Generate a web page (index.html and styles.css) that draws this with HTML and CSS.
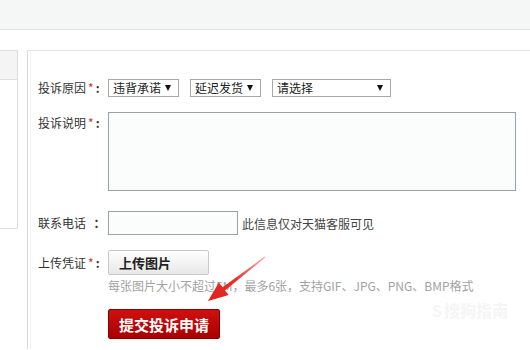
FILE: index.html
```html
<!doctype html>
<html lang="zh-CN">

<head>
  <meta charset="utf-8">
  <meta name="viewport" content="width=device-width, initial-scale=1">
  <title>投诉申请</title>
  <link rel="stylesheet" href="styles.css">
</head>

<body>
  <div class="topbar"></div>

  <div class="page">
    <div class="side">
      <div class="side-head"></div>
    </div>

    <div class="main">
      <div class="row row-reason">
        <span class="label">投诉原因<em>*</em><b>:</b></span>
        <div class="select sel-a"><span>违背承诺</span><i></i></div>
        <div class="select sel-b"><span>延迟发货</span><i></i></div>
        <div class="select sel-c"><span>请选择</span><i></i></div>
      </div>

      <div class="row row-desc">
        <span class="label">投诉说明<em>*</em><b>:</b></span>
        <textarea class="desc"></textarea>
      </div>

      <div class="row row-phone">
        <span class="label">联系电话&nbsp;&nbsp;<b>：</b></span>
        <input class="phone" type="text">
        <span class="note">此信息仅对天猫客服可见</span>
      </div>

      <div class="row row-upload">
        <span class="label">上传凭证<em>*</em><b>:</b></span>
        <button class="btn-upload" type="button">上传图片</button>
      </div>
      <p class="hint">每张图片大小不超过5M，最多6张，支持GIF、JPG、PNG、BMP格式</p>

      <button class="btn-submit" type="button">提交投诉申请</button>
    </div>
  </div>

  <!-- red pointer drawn over the page -->
  <svg class="arrow" width="530" height="350" viewBox="0 0 530 350">
    <defs>
      <linearGradient id="ag" x1="265" y1="257" x2="208" y2="301" gradientUnits="userSpaceOnUse">
        <stop offset="0" stop-color="#f46a66" stop-opacity="0.6"/>
        <stop offset="0.5" stop-color="#e8302c"/>
        <stop offset="1" stop-color="#e0201c"/>
      </linearGradient>
    </defs>
    <polygon fill="url(#ag)" points="208,301 218.9,282.5 222.6,287.2 264.7,256.6 265.3,257.4 225,290.4 228.7,295.1"/>
  </svg>

  <div class="mark"><span class="mark-s">S</span>搜狗指南</div>
</body>
</html>
```

FILE: styles.css
```css
body {
  margin: 0;
  font-family: "Noto Sans CJK SC", "Liberation Sans", sans-serif;
  font-size: 12px;
  color: #333;
  background: #fff;
  overflow: hidden;
}
.topbar {
  height: 29px;
  background: #f5f7f6;
  border-bottom: 1px solid #dfe2e1;
}
.page {
  display: flex;
  margin-top: 20px;
}
.side {
  width: 17px;
  height: 177px;
  border: 1px solid #dedede;
  border-left: none;
}
.side-head {
  height: 28px;
  background: #f4f4f4;
  border-bottom: 1px solid #dedede;
}
.main {
  flex: 1;
  margin-left: 9px;
  height: 270px;
  border-left: 1px solid #dadada;
  border-top: 1px solid #e3e3e3;
  box-shadow: inset 2px 0 0 #fff, inset 3px 0 0 #f1f1f1;
  padding: 28px 0 0 10px;
}
.row {
  display: flex;
  align-items: center;
}
.label {
  width: 70px;
  flex: none;
  line-height: 18px;
  white-space: nowrap;
}
.label em {
  font-style: normal;
  color: #c4332d;
  margin-left: 2px;
}
.label b {
  margin-left: 2px;
}
.select {
  box-sizing: border-box;
  height: 18px;
  border: 1px solid #a8a8a8;
  display: flex;
  align-items: center;
  justify-content: space-between;
  padding: 0 7px 0 4px;
  margin-right: 11px;
  line-height: 16px;
  color: #222;
}
.select i {
  width: 0;
  height: 0;
  border-left: 3px solid transparent;
  border-right: 3px solid transparent;
  border-top: 6px solid #111;
}
.sel-a,
.sel-b {
  width: 71px;
}
.sel-c {
  width: 119px;
}
.row-desc {
  margin-top: 15px;
  align-items: flex-start;
}
.row-desc .label {
  padding-top: 2px;
}
.desc {
  box-sizing: border-box;
  width: 408px;
  height: 79px;
  margin: 0;
  border: 1px solid #97a3a8;
  background: #fbfdfd;
  resize: none;
}
.row-phone {
  margin-top: 20px;
}
.phone {
  box-sizing: border-box;
  width: 130px;
  height: 24px;
  margin: 0;
  border: 1px solid #97a3a8;
  background: #fbfdfd;
}
.note {
  margin-left: 4px;
  color: #444;
}
.row-upload {
  margin-top: 15px;
}
.btn-upload {
  box-sizing: border-box;
  width: 101px;
  height: 25px;
  margin: 0;
  padding: 0 0 0 10px;
  text-align: left;
  font-family: inherit;
  font-size: 13px;
  font-weight: bold;
  color: #222;
  background: linear-gradient(#fefefe, #e8e8e8);
  border: 1px solid #cacaca;
  border-radius: 2px;
}
.hint {
  margin: 3px 0 0 70px;
  line-height: 16px;
  color: #a2a2a2;
}
.btn-submit {
  box-sizing: border-box;
  width: 112px;
  height: 30px;
  margin: 15px 0 0 70px;
  padding: 0;
  font-family: inherit;
  font-size: 15px;
  font-weight: bold;
  color: #fff;
  background: linear-gradient(#cf1010, #a80000);
  border: 1px solid #8c0000;
  border-radius: 2px;
}
.arrow {
  position: absolute;
  left: 0;
  top: 0;
  pointer-events: none;
}
.mark {
  position: absolute;
  left: 432px;
  top: 298px;
  font-size: 16px;
  font-weight: bold;
  color: #f5f5f5;
}
.mark-s {
  margin-right: 2px;
}
```
